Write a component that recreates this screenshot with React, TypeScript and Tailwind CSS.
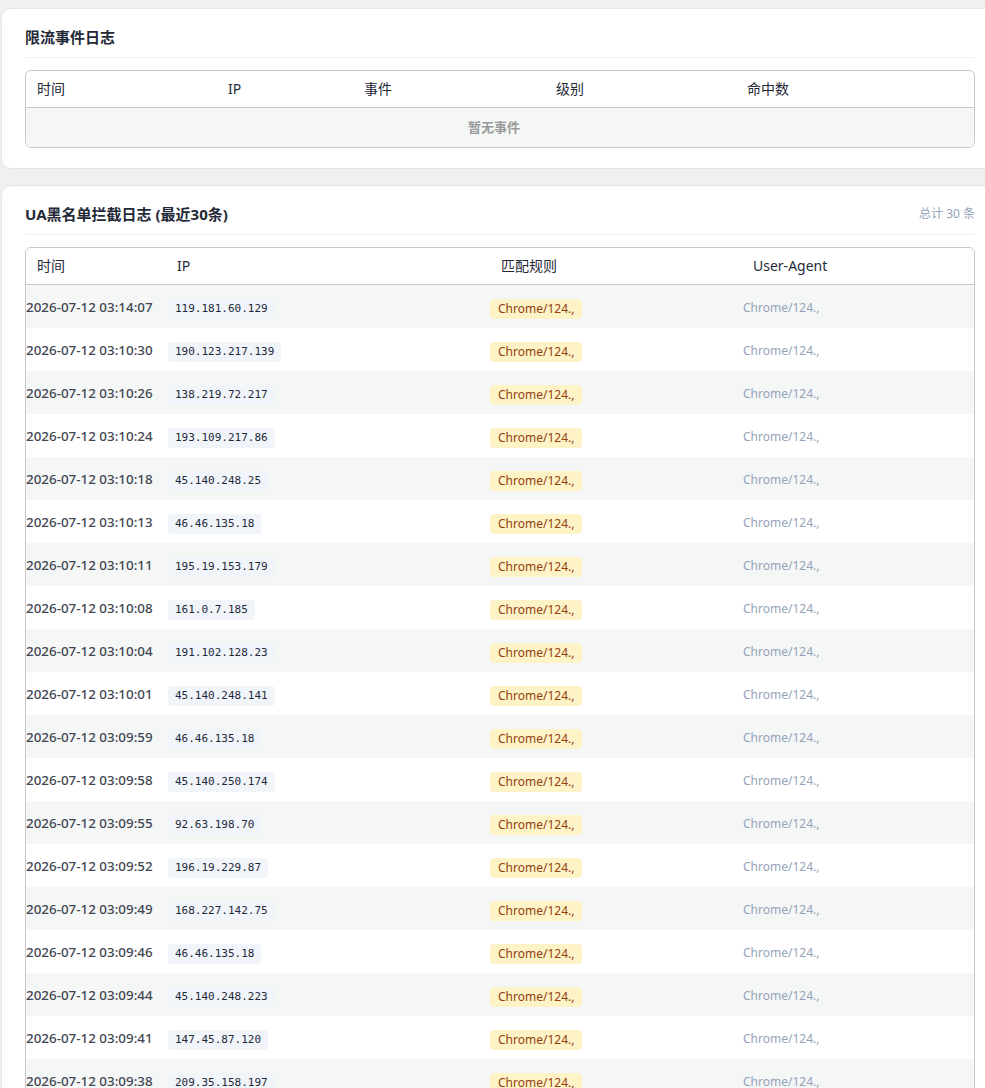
import React from "react";

const rows = [
  ["2026-07-12 03:14:07", "119.181.60.129"],
  ["2026-07-12 03:10:30", "190.123.217.139"],
  ["2026-07-12 03:10:26", "138.219.72.217"],
  ["2026-07-12 03:10:24", "193.109.217.86"],
  ["2026-07-12 03:10:18", "45.140.248.25"],
  ["2026-07-12 03:10:13", "46.46.135.18"],
  ["2026-07-12 03:10:11", "195.19.153.179"],
  ["2026-07-12 03:10:08", "161.0.7.185"],
  ["2026-07-12 03:10:04", "191.102.128.23"],
  ["2026-07-12 03:10:01", "45.140.248.141"],
  ["2026-07-12 03:09:59", "46.46.135.18"],
  ["2026-07-12 03:09:58", "45.140.250.174"],
  ["2026-07-12 03:09:55", "92.63.198.70"],
  ["2026-07-12 03:09:52", "196.19.229.87"],
  ["2026-07-12 03:09:49", "168.227.142.75"],
  ["2026-07-12 03:09:46", "46.46.135.18"],
  ["2026-07-12 03:09:44", "45.140.248.223"],
  ["2026-07-12 03:09:41", "147.45.87.120"],
  ["2026-07-12 03:09:38", "209.35.158.197"],
];

const font = "font-['Noto_Sans','Noto_Sans_CJK_SC',sans-serif]";

export default function App() {
  return (
    <div className={`h-[1088px] overflow-hidden bg-[#f0f0f0] pt-2 pl-px ${font}`}>
      {/* Rate limit events */}
      <section className="w-[998px] bg-white border border-[#e6e6e6] rounded-[10px] px-[23px] pt-4 pb-5">
        <div className="flex items-center justify-between pb-2 border-b border-[#f0f0f0]">
          <h2 className="text-[15px] font-bold text-[#1f2937] leading-6">限流事件日志</h2>
        </div>
        <div className="mt-3 border border-[#c8c8c8] rounded-md overflow-hidden">
          <div className="grid grid-cols-[191px_136px_192px_191px_1fr] h-[37px] items-center border-b border-[#c8c8c8] text-sm text-[#1f2937]">
            <div className="pl-[11px]">时间</div>
            <div className="pl-[11px]">IP</div>
            <div className="pl-[11px]">事件</div>
            <div className="pl-[11px]">级别</div>
            <div className="pl-[11px]">命中数</div>
          </div>
          <div className="h-[39px] flex items-center justify-center bg-[#f5f6f6] text-[13px] font-semibold text-[#999999] pr-3">
            暂无事件
          </div>
        </div>
      </section>

      {/* UA blacklist log */}
      <section className="mt-4 w-[998px] bg-white border border-[#e6e6e6] rounded-[10px] px-[23px] pt-4 pb-5">
        <div className="flex items-center justify-between pb-2 border-b border-[#f0f0f0]">
          <h2 className="text-[15px] font-bold text-[#1f2937] leading-6">UA黑名单拦截日志 (最近30条)</h2>
          <span className="text-xs text-[#94a3b8]">总计 30 条</span>
        </div>
        <div className="mt-3 border border-[#c8c8c8] rounded-md overflow-hidden">
          <div className="grid grid-cols-[140px_324px_252px_1fr] h-[37px] items-center border-b border-[#c8c8c8] text-sm text-[#1f2937]">
            <div className="pl-[11px]">时间</div>
            <div className="pl-[11px]">IP</div>
            <div className="pl-[11px]">匹配规则</div>
            <div className="pl-[11px]">User-Agent</div>
          </div>
          {rows.map(([time, ip], i) => (
            <div
              key={i}
              className={`grid grid-cols-[140px_324px_252px_1fr] h-[43px] items-center ${i % 2 === 0 ? "bg-[#f5f6f6]" : "bg-white"}`}
            >
              <div className="pt-[2px] text-[13.4px] font-medium text-[#3f4652] whitespace-nowrap">{time}</div>
              <div className="pl-[2px]">
                <span className="inline-block px-[7px] py-[2px] rounded bg-[#f1f5f9] text-[11px] text-[#1e293b] font-['DejaVu_Sans_Mono',monospace]">
                  {ip}
                </span>
              </div>
              <div>
                <span className="inline-block px-2 py-[2px] rounded bg-[#fef3c7] text-xs text-[#92400e]">
                  Chrome/124.,
                </span>
              </div>
              <div className="pl-[1px] pt-[2px] text-xs text-[#94a3b8]">Chrome/124.,</div>
            </div>
          ))}
        </div>
      </section>
    </div>
  );
}
